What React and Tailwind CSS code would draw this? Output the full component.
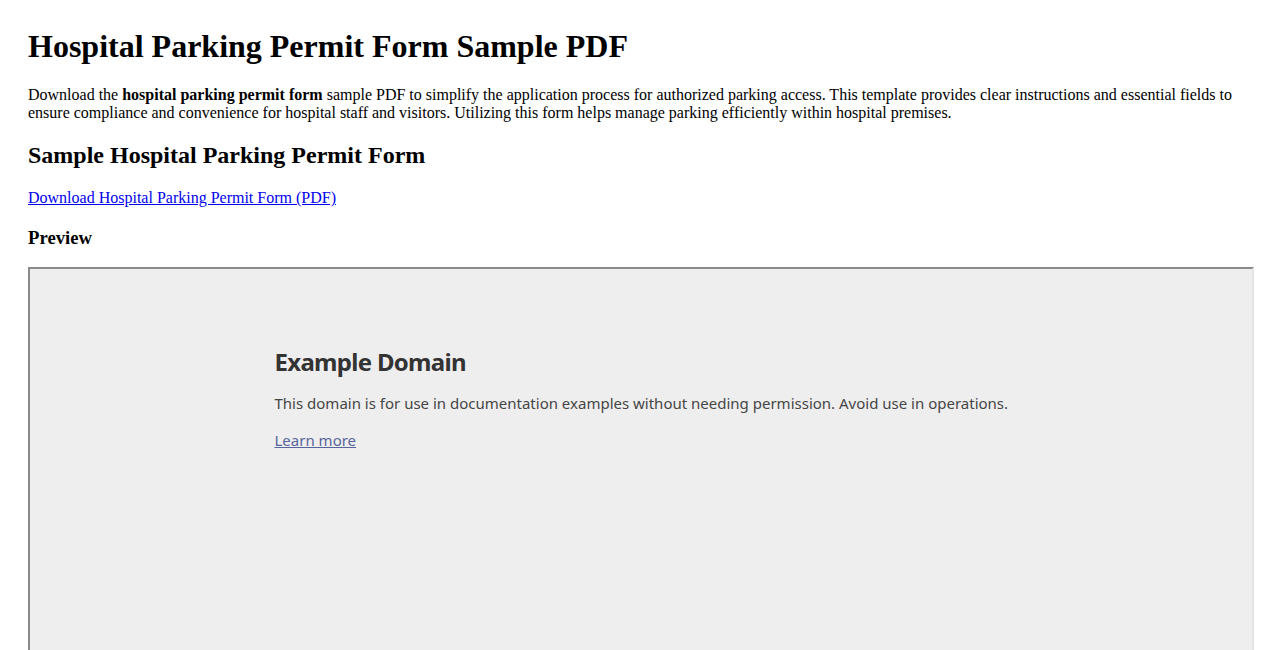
export default function App() {
  const serif = { fontFamily: '"Liberation Serif", "Times New Roman", serif' };

  return (
    <div className="min-h-screen bg-white pl-[28px] pr-[24px] pt-[28px] text-black" style={serif}>
      {/* Page heading */}
      <h1 className="m-0 text-[32px] font-bold leading-[37px]">
        Hospital Parking Permit Form Sample PDF
      </h1>

      <p className="mt-[21px] pr-[4px] text-[16px] leading-[18px]">
        Download the <strong className="font-bold">hospital parking permit form</strong> sample PDF
        to simplify the application process for authorized parking access. This template provides
        clear instructions and essential fields to ensure compliance and convenience for hospital
        staff and visitors. Utilizing this form helps manage parking efficiently within hospital
        premises.
      </p>

      <h2 className="mt-[19px] text-[24px] font-bold leading-[28px]">
        Sample Hospital Parking Permit Form
      </h2>

      <p className="mt-[20px] text-[16px] leading-[18px]">
        <a href="#" className="text-[#0000ee] underline">
          Download Hospital Parking Permit Form (PDF)
        </a>
      </p>

      <h3 className="mt-[20px] text-[18.72px] font-bold leading-[21px]">Preview</h3>

      {/* Embedded preview frame */}
      <div className="mt-[19px] h-[600px] w-full border-2 border-t-[#8a8a8a] border-l-[#8a8a8a] border-r-[#e3e3e3] border-b-[#e3e3e3] bg-[#eeeeee]">
        <div
          className="mx-auto w-[733px] pt-[77px] text-[#333333]"
          style={{ fontFamily: '"Noto Sans", "Open Sans", sans-serif' }}
        >
          <h1 className="text-[24px] font-bold leading-[32px] tracking-[-0.7px]">Example Domain</h1>
          <p className="mt-[15px] whitespace-nowrap text-[15px] leading-[21px] opacity-90">
            This domain is for use in documentation examples without needing permission. Avoid use in
            operations.
          </p>
          <p className="mt-[16px] text-[15px] leading-[21px] opacity-80">
            <a href="#" className="text-[#334488] underline">
              Learn more
            </a>
          </p>
        </div>
      </div>
    </div>
  );
}
